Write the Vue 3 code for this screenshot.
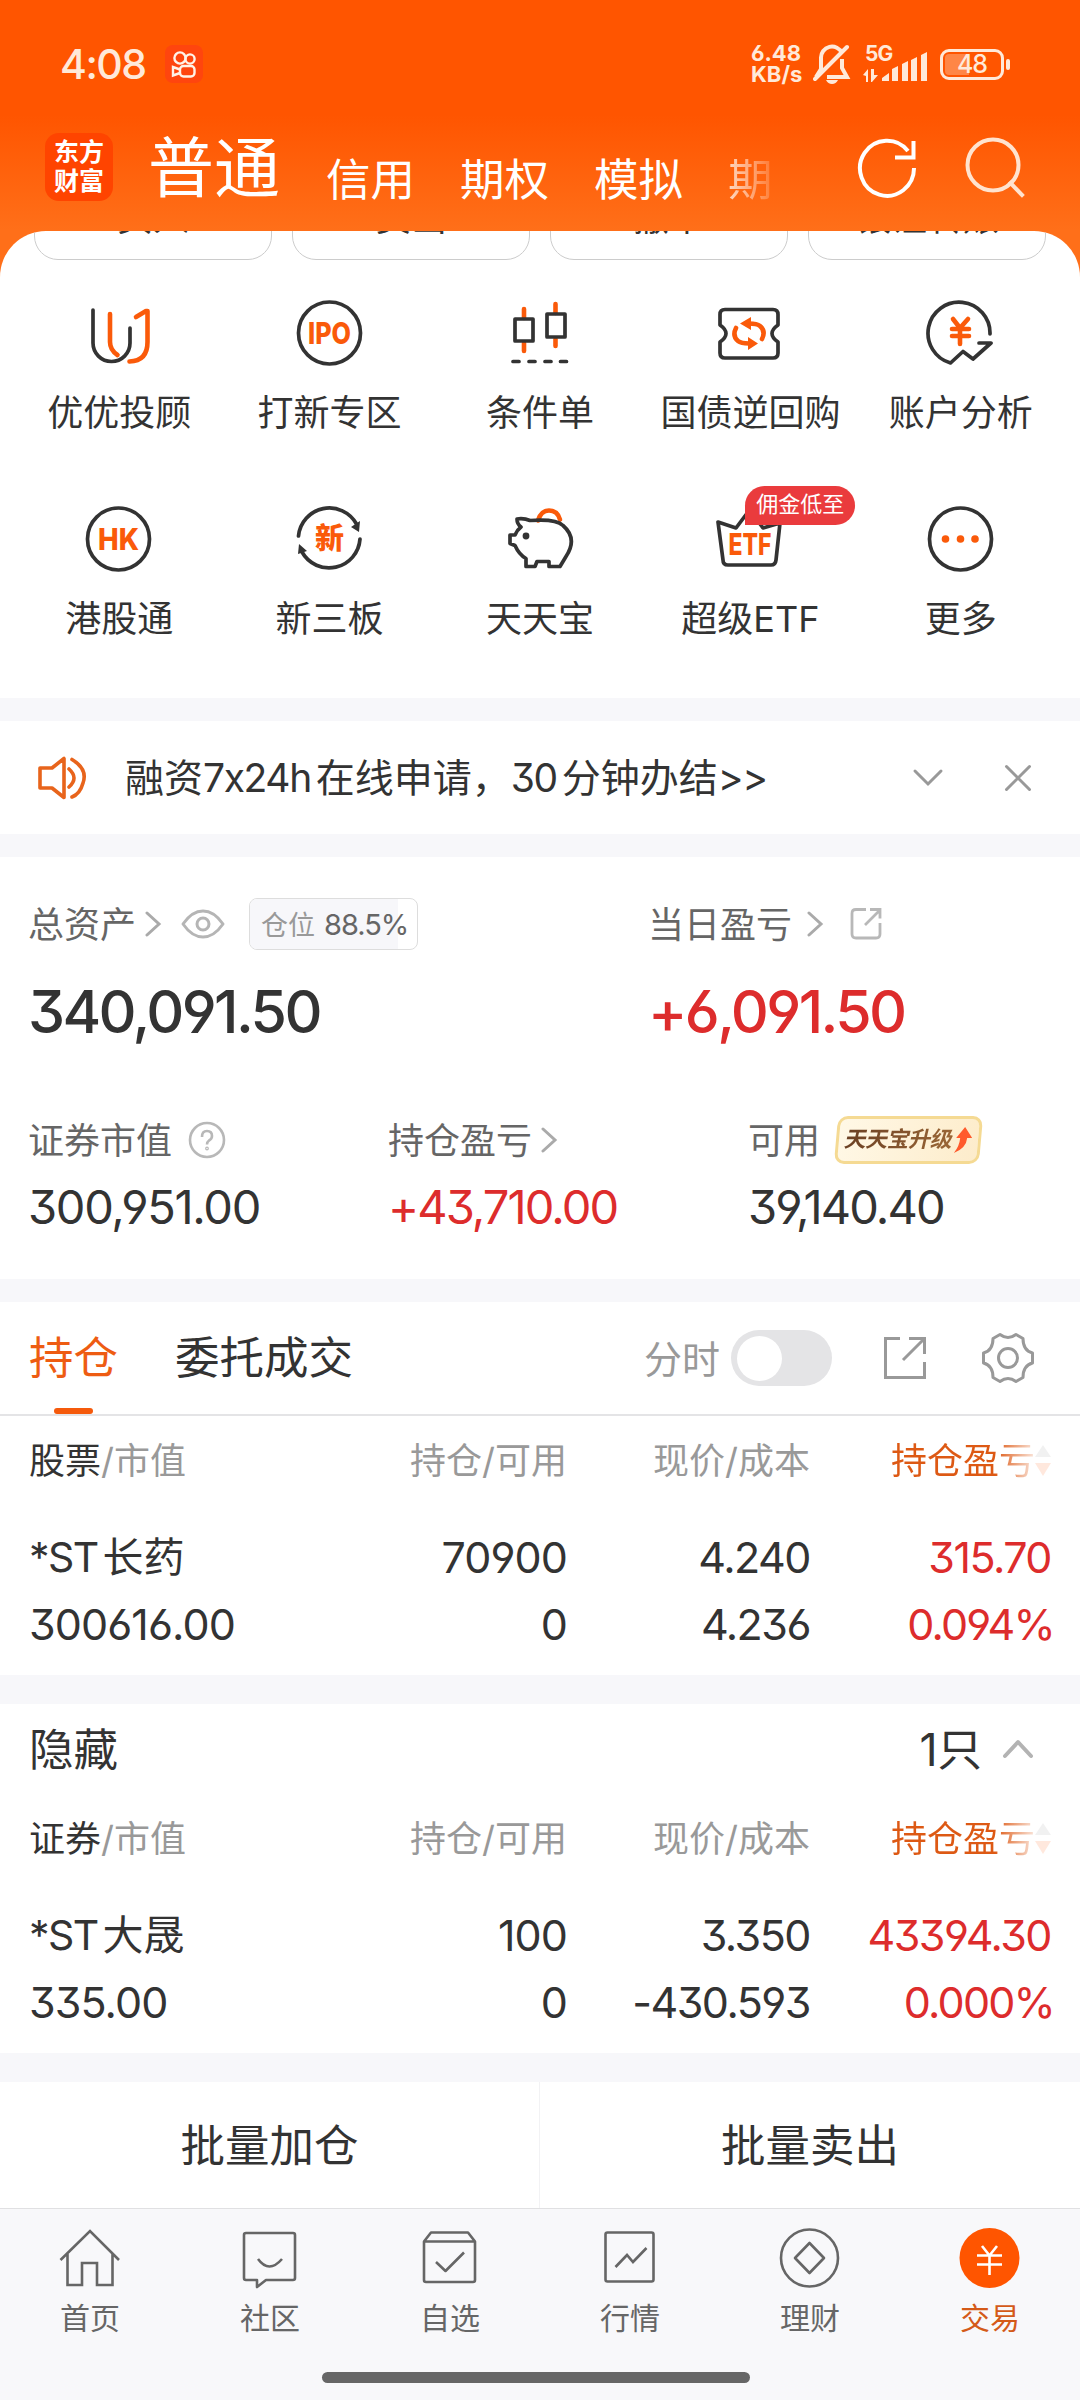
<template>
  <div class="trade-page">
    <header class="top">
      <div class="status-bar">
        <span class="clock">4:08</span>
        <svg class="app-badge" width="38" height="38" viewBox="0 0 38 38" fill="none" stroke="#fff3e8" stroke-width="2.4">
          <rect width="38" height="38" rx="8" fill="#ff450e" stroke="none" />
          <circle cx="15" cy="13" r="5.6" />
          <circle cx="25" cy="14" r="4.6" />
          <rect x="15" y="21" width="14.5" height="10.5" rx="3.5" />
          <path d="M15 24.5l-7-2.5v8.5l7-2.5" />
        </svg>
        <div class="status-right">
          <div class="net-speed"><span>6.48</span><span>KB/s</span></div>
          <svg class="bell" width="38" height="40" viewBox="0 0 38 40" fill="none" stroke="#ffe9d9" stroke-width="4">
            <path d="M29 9A11 11 0 0 0 8 14V25L3 33M14 33H34L29 24V15" />
            <path d="M2 35L34 3" stroke-linecap="round" />
            <path d="M13 36h12q-2 4-6 4t-6-4z" fill="#ffe9d9" stroke="none" />
          </svg>
          <div class="signal">
            <span class="signal-type">5G</span>
            <svg width="66" height="40" viewBox="0 0 66 40" fill="#ffe9d9">
              <path d="M0 31l5-6v13H3v-6zM8 25h3v6h4l-6 7H8z" />
              <path d="M19 37v-3l7-5v8zM29 25l6-3v15h-6zM39 20l6-3v20h-6zM48 16l6-3v24h-6zM58 11l6-3v29h-6z" />
            </svg>
          </div>
          <div class="battery"><span class="battery-fill"></span><span class="battery-num">48</span></div>
          <span class="battery-cap"></span>
        </div>
      </div>

      <div class="nav-row">
        <div class="brand"><span>东方</span><span>财富</span></div>
        <span class="account active">普通</span>
        <div class="accounts">
          <span v-for="name in accounts" :key="name" class="account">{{ name }}</span>
          <span class="account faded">期</span>
        </div>
        <div class="nav-icons">
          <svg width="62" height="66" viewBox="0 0 62 66" fill="none" stroke="#fff" stroke-width="4">
            <path d="M57 34A27 27.5 0 1 1 51 17" />
            <path d="M56.5 7V23.5H38" />
          </svg>
          <svg width="62" height="66" viewBox="0 0 62 66" fill="none" stroke="#ffe3cf" stroke-width="4">
            <circle cx="29" cy="31" r="25.5" />
            <path d="M46.5 49L58 61" stroke-linecap="square" />
          </svg>
        </div>
      </div>
    </header>

    <main class="content">
      <div class="quick-actions">
        <span v-for="name in quickActions" :key="name" class="quick-btn">{{ name }}</span>
      </div>

      <div class="features">
        <div v-for="item in features" :key="item.label" class="feature">
          <svg class="feature-icon" width="72" height="72" viewBox="0 0 72 72" v-html="item.icon"></svg>
          <span v-if="item.badge" class="feature-badge">{{ item.badge }}</span>
          <span class="feature-label">{{ item.label }}</span>
        </div>
      </div>
    </main>

    <section class="notice">
      <svg width="52" height="46" viewBox="0 0 52 46" fill="none" stroke="#e8641b" stroke-width="3.6" stroke-linejoin="round" stroke-linecap="round">
        <path d="M5 13h12l12-9.5v39L17 33H5z" />
        <path d="M34 14q10 9 0 18M37 4.500Q53 14 48 28q-3 11-11 14" />
      </svg>
      <span class="notice-text">融资<i>7x24h</i>在线申请，<i>30</i>分钟办结<i class="arrows">&gt;&gt;</i></span>
      <svg class="notice-down" width="32" height="20" viewBox="0 0 32 20" fill="none" stroke="#999" stroke-width="3" stroke-linecap="round">
        <path d="M3 3l13 13L29 3" />
      </svg>
      <svg width="28" height="28" viewBox="0 0 28 28" fill="none" stroke="#999" stroke-width="3" stroke-linecap="round">
        <path d="M2.5 2.5l23 23M25.5 2.5l-23 23" />
      </svg>
    </section>

    <section class="assets">
      <div class="asset">
        <div class="asset-label">
          <span>总资产</span>
          <svg class="chevron near" width="18" height="26" viewBox="0 0 18 26"><path d="M3 2l12 11L3 24" /></svg>
          <svg class="eye" width="44" height="32" viewBox="0 0 44 32" fill="none" stroke="#b5b5b5" stroke-width="3">
            <path d="M2 16Q11 3 22 3t20 13Q33 29 22 29T2 16z" stroke-linejoin="round" />
            <circle cx="22" cy="16" r="6" />
          </svg>
          <span class="position"><span class="position-fill" :style="{ width: position + '%' }"></span><em>仓位</em><b>{{ position }}%</b></span>
        </div>
        <strong class="asset-main">340,091.50</strong>
      </div>
      <div class="asset">
        <div class="asset-label">
          <span>当日盈亏</span>
          <svg class="chevron far" width="18" height="26" viewBox="0 0 18 26"><path d="M3 2l12 11L3 24" /></svg>
          <svg class="share-sm" width="36" height="36" viewBox="0 0 36 36" fill="none" stroke="#b8b8b8" stroke-width="2.8">
            <path d="M18 3.500H8q-4 0-4 4V28q0 4 4 4h20q4 0 4-4V17" />
            <path d="M22 3.500h10v9M31 5L17 19" />
          </svg>
        </div>
        <strong class="asset-main up">+6,091.50</strong>
      </div>
      <div class="asset-subs">
        <div class="asset">
          <div class="asset-label">
            <span>证券市值</span>
            <svg class="help" width="38" height="38" viewBox="0 0 38 38" fill="none" stroke="#b8b8b8" stroke-width="2.6">
              <circle cx="19" cy="19" r="17" />
              <path d="M14 16q0-6 5-6t5 5q0 3-3 4.500-2 1.500-2 4" />
              <circle cx="19" cy="27.5" r="0.6" />
            </svg>
          </div>
          <strong class="asset-sub">300,951.00</strong>
        </div>
        <div class="asset">
          <div class="asset-label">
            <span>持仓盈亏</span>
            <svg class="chevron near" width="18" height="26" viewBox="0 0 18 26"><path d="M3 2l12 11L3 24" /></svg>
          </div>
          <strong class="asset-sub up tight">+43,710.00</strong>
        </div>
        <div class="asset">
          <div class="asset-label">
            <span>可用</span>
            <span class="upgrade">
              <span class="upgrade-text">天天宝升级</span>
              <svg width="20" height="26" viewBox="0 0 20 26" fill="#ff5a2c"><path d="M12 0l8 11h-5q0 10-12 15 5-7 5-15H4z" /></svg>
            </span>
          </div>
          <strong class="asset-sub tight">39,140.40</strong>
        </div>
      </div>
    </section>

    <section class="holdings">
      <div class="tabs">
        <span class="tab active">持仓</span>
        <span class="tab">委托成交</span>
        <div class="tools">
          <span class="minute">分时</span>
          <span class="switch"></span>
          <svg class="share" width="46" height="46" viewBox="0 0 46 46" fill="none" stroke="#999" stroke-width="3">
            <path d="M18 3.500H3.500V42.500H42.500V27M27 3.500H42.500V19M41.500 4.500L21 25" />
          </svg>
          <svg width="54" height="54" viewBox="0 0 54 54" fill="none" stroke="#999" stroke-width="3" stroke-linejoin="round">
            <path d="M19 3.500q8 6 16 0l7 4q0 12 9.500 14.500v10q-9.500 2.500-9.500 14.500l-7 4q-8-6-16 0l-7-4q0-12-9.500-14.500v-10q9.500-2.500 9.500-14.500z" />
            <circle cx="27" cy="27" r="9.5" />
          </svg>
        </div>
      </div>
      <div class="table-head">
        <span><b>股票</b>/市值</span><span>持仓/可用</span><span>现价/成本</span>
        <span class="sorted"><i>持仓盈亏</i><svg width="16" height="32" viewBox="0 0 16 32"><path d="M8 0l8 12H0z" fill="#999" /><path d="M8 31l8-13H0z" fill="#ff5500" /></svg></span>
      </div>
      <div class="table-row">
        <span class="name"><i>*ST</i>长药</span><span>70900</span><span class="price">4.240</span><span class="up price">315.70</span>
        <span>300616.00</span><span>0</span><span class="price">4.236</span><span class="up percent">0.094%</span>
      </div>
    </section>

    <section class="hidden-stocks">
      <div class="hidden-title">
        <span>隐藏</span>
        <span class="count">1只</span>
        <svg width="34" height="22" viewBox="0 0 34 22" fill="none" stroke="#b3b3b3" stroke-width="4" stroke-linecap="round" stroke-linejoin="round">
          <path d="M4 18L17 4l13 14" />
        </svg>
      </div>
      <div class="table-head">
        <span><b>证券</b>/市值</span><span>持仓/可用</span><span>现价/成本</span>
        <span class="sorted"><i>持仓盈亏</i><svg width="16" height="32" viewBox="0 0 16 32"><path d="M8 0l8 12H0z" fill="#999" /><path d="M8 31l8-13H0z" fill="#ff5500" /></svg></span>
      </div>
      <div class="table-row">
        <span class="name"><i>*ST</i>大晟</span><span>100</span><span class="price">3.350</span><span class="up price">43394.30</span>
        <span>335.00</span><span>0</span><span class="price">-430.593</span><span class="up percent">0.000%</span>
      </div>
    </section>

    <section class="batch">
      <span>批量加仓</span>
      <span>批量卖出</span>
    </section>

    <footer class="bottom">
      <nav class="bottom-nav">
        <div v-for="item in navItems" :key="item.label" class="nav-item" :class="{ active: item.active }">
          <svg width="64" height="64" viewBox="0 0 64 64" fill="none" stroke="#666" stroke-width="2.6" v-html="item.icon"></svg>
          <span>{{ item.label }}</span>
        </div>
      </nav>
      <div class="home-indicator"></div>
    </footer>
  </div>
</template>

<script setup>
import { ref } from 'vue'

const position = ref(88.5)

const accounts = ['信用', '期权', '模拟']
const quickActions = ['买入', '卖出', '撤单', '银证转账']

const dark = 'fill="none" stroke="#333" stroke-width="3.7" stroke-linecap="round" stroke-linejoin="round"'
const orange = 'fill="none" stroke="#fa5a0a" stroke-width="4.6" stroke-linecap="round" stroke-linejoin="round"'
const label = 'fill="#fa5a0a" text-anchor="middle" font-weight="800"'
const ring = `<circle cx="35.5" cy="36" r="31" ${dark}/>`

const features = [
  {
    label: '优优投顾',
    icon: `<path d="M10 13V46a18.500 18.500 0 0 0 37 0V31" ${dark}/>
      <path d="M27 17V45q0 8 7.500 13M53 20l10-6h1.500V45q0 19-18 19.500" ${orange}/>`,
  },
  {
    label: '打新专区',
    icon: `${ring}<text x="35.500" y="46.500" font-family="Inter, sans-serif" font-size="30" textLength="43" lengthAdjust="spacingAndGlyphs" ${label}>IPO</text>`,
  },
  {
    label: '条件单',
    icon: `<path d="M20 12v9M20 46v8M51.500 7v9M51.500 42v7" ${orange}/>
      <path d="M11 22h18v22H11zM43 17h18v23H43zM9 64.500h6M25 64.500h6M41 64.500h6M56.500 64.500h6" ${dark}/>`,
  },
  {
    label: '国债逆回购',
    icon: `<path d="M11 12.500H59q5 0 5 5V28q-12 8.500 0 17V56q0 5-5 5H11q-5 0-5-5V45q12-8.500 0-17V17.500q0-5 5-5z" ${dark}/>
      <path d="M22 31q-4 8 2 13 3 2.500 11 2.500M48 42q4-8-2-13-3-2.500-11-2.500" ${orange}/>
      <path d="M37 20v13l-11-6.500zM34 40v13l10-6.500z" fill="#fa5a0a"/>`,
  },
  {
    label: '账户分析',
    icon: `<path d="M65 37A31 31 0 1 0 25.500 66L38 54.500l10 7.500L66 46H54" ${dark}/>
      <path d="M28 22l7 9 8-9M35 31v16M27 32h17M27 39h17" ${orange}/>`,
  },
  {
    label: '港股通',
    icon: `${ring}<text x="35.500" y="46.500" font-family="Inter, sans-serif" font-size="30" textLength="41" lengthAdjust="spacingAndGlyphs" ${label}>HK</text>`,
  },
  {
    label: '新三板',
    icon: `<path d="M4.500 33A31 31 0 0 1 62.500 21M66 36A31 31 0 0 1 8 49" ${dark}/>
      <path d="M66 18l-1 11-8-5zM5 41l8 7-9 3z" fill="#333"/>
      <text x="35.500" y="46" font-family="Noto Sans CJK SC, sans-serif" font-size="29" ${label}>新</text>`,
  },
  {
    label: '天天宝',
    icon: `<path d="M34 17.500q3-10 11-10 8.500 0 11 9" ${orange}/>
      <path d="M13 16q7-1 13 1.500 26-2 33 5 15 13 3 31l-6 10H45v-5H33l-2 5H22v-8q-7-4-11-13l-5-2V32h5q2-5 6-8-4-3-4-8z" ${dark}/>
      <circle cx="22" cy="33" r="3.400" fill="#333"/>`,
  },
  {
    label: '超级ETF',
    badge: '佣金低至',
    icon: `<path d="M4 19l18 6L35.500 7 49 25l17-5-4 37q-.5 5-5 5H14q-5 0-5-5z" ${dark}/>
      <text x="36" y="52" font-family="Inter, sans-serif" font-size="30" textLength="43" lengthAdjust="spacingAndGlyphs" ${label}>ETF</text>`,
  },
  {
    label: '更多',
    icon: `${ring}<g fill="#fa5a0a"><circle cx="20.500" cy="36" r="3.800"/><circle cx="35.500" cy="36" r="3.800"/><circle cx="50" cy="36" r="3.800"/></g>`,
  },
]

const navItems = [
  { label: '首页', icon: '<path d="M2.500 34L32 5l29 29M9.500 28v31H24V37h15v22h15.500V28"/>' },
  { label: '社区', icon: '<path d="M8 7h47q2 0 2 2v43q0 2-2 2H28l-9 7v-7H8q-2 0-2-2V9q0-2 2-2zM20 33q11 15 24 0" stroke-linejoin="round"/>' },
  { label: '自选', icon: '<path d="M13 6.500h37l7 9V54q0 2-2 2H8q-2 0-2-2V15.500zM6 15.500h51M18 36l9.500 9L46 26.500" stroke-linejoin="round"/>' },
  { label: '行情', icon: '<rect x="7.500" y="6.500" width="48" height="49" rx="2"/><path d="M17.500 41L29 29l6 7 13.500-14"/>' },
  { label: '理财', icon: '<circle cx="31.500" cy="32" r="28.500"/><path d="M31.500 17L46 32 31.500 47 17 32z" stroke-linejoin="round"/>' },
  {
    label: '交易',
    active: true,
    icon: '<circle cx="31.500" cy="32" r="30" fill="#ff5500" stroke="none"/><path d="M24 20l7.500 9.500L39 20M31.500 29v20M19 29.500h25M19 38.500h25" stroke="#fff"/>',
  },
]
</script>

<style>
body {
  margin: 0;
}
</style>

<style scoped>
.trade-page {
  width: 1080px;
  height: 2400px;
  overflow: hidden;
  display: flex;
  flex-direction: column;
  background: linear-gradient(#ff5500 115px, #ff6f19 230px, #ff6f19 290px, #f7f7fa 290px);
  color: #333;
  font-family: Inter, 'Noto Sans CJK SC', sans-serif;
  font-feature-settings: 'cv03', 'cv04', 'cv09';
}

.trade-page > * {
  flex: none;
  box-sizing: border-box;
}

i,
em {
  font-style: normal;
}

svg {
  flex: none;
  display: block;
}

.up {
  color: #dd2c2c;
}

.top {
  height: 231px;
}

.status-bar {
  height: 128px;
  padding: 0 70px 0 60px;
  display: flex;
  align-items: center;
  color: #ffe9d9;
}

.clock {
  font-size: 41px;
  font-weight: 500;
  letter-spacing: -1.5px;
}

.app-badge {
  margin-left: 19px;
}

.status-right {
  margin-left: auto;
  display: flex;
  align-items: center;
}

.net-speed {
  width: 62px;
  display: flex;
  flex-direction: column;
  font-size: 22px;
  line-height: 21px;
  font-weight: 700;
}

.signal {
  position: relative;
  width: 66px;
  margin-left: 12px;
}

.signal-type {
  position: absolute;
  left: 2px;
  top: -2px;
  font-size: 21px;
  line-height: 24px;
  font-weight: 700;
  letter-spacing: -1px;
}

.battery {
  width: 64px;
  height: 31px;
  margin-left: 11px;
  box-sizing: border-box;
  border: 3px solid #ffe9d9;
  border-radius: 9px;
  padding: 2px;
  display: flex;
  position: relative;
}

.battery-fill {
  width: 24px;
  background: #ff8646;
  border-radius: 4px 0 0 4px;
}

.battery-num {
  position: absolute;
  inset: 0;
  text-align: center;
  font-size: 25px;
  line-height: 25px;
  font-weight: 500;
  letter-spacing: -1px;
}

.battery-cap {
  width: 4px;
  height: 11px;
  margin-left: 2px;
  border-radius: 2px;
  background: #ffe9d9;
}

.nav-row {
  height: 78px;
  padding: 0 54px 0 45px;
  display: flex;
  align-items: center;
  color: #fff;
}

.brand {
  width: 68px;
  height: 68px;
  border-radius: 14px;
  background: #ff4400;
  display: flex;
  flex-direction: column;
  align-items: center;
  justify-content: center;
  font-size: 25px;
  line-height: 29px;
  font-weight: 700;
}

.account {
  font-size: 44.5px;
  line-height: 60px;
}

.account.active {
  margin-left: 35px;
  padding-top: 2px;
  font-size: 66px;
  line-height: 78px;
}

.accounts {
  display: flex;
  gap: 45px;
  margin-left: 46px;
  padding-top: 25px;
}

.account.faded {
  background: linear-gradient(90deg, rgba(255, 255, 255, 0.75), rgba(255, 255, 255, 0.15));
  background-clip: text;
  color: transparent;
}

.nav-icons {
  margin-left: auto;
  display: flex;
  gap: 45px;
}

.content {
  height: 467px;
  overflow: hidden;
  border-radius: 46px 46px 0 0;
  background: #fff;
}

.quick-actions {
  display: flex;
  gap: 20px;
  padding: 0 34px;
  height: 29px;
  align-items: flex-end;
}

.quick-btn {
  flex: 1;
  height: 84px;
  box-sizing: border-box;
  border: 1px solid #ccc;
  border-radius: 24px;
  text-align: center;
  font-size: 36px;
  line-height: 83px;
}

.features {
  display: grid;
  grid-template-columns: repeat(5, 1fr);
  grid-auto-rows: 205.5px;
  padding: 37px 14px 0;
}

.feature {
  position: relative;
  display: flex;
  flex-direction: column;
  align-items: center;
}

.feature-label {
  margin-top: 18px;
  font-size: 36px;
  line-height: 52px;
  white-space: nowrap;
}

.feature-badge {
  position: absolute;
  left: 100px;
  top: -17px;
  width: 110px;
  height: 39px;
  border-radius: 20px 20px 20px 0;
  background: #ea3b3d;
  color: #fff;
  font-size: 22px;
  line-height: 37px;
  text-align: center;
}

.notice {
  height: 113px;
  margin-top: 23px;
  padding: 0 48px 0 35px;
  display: flex;
  align-items: center;
  background: #fff;
}

.notice-text {
  margin-left: 38px;
  padding-bottom: 6px;
  font-size: 39px;
  white-space: nowrap;
}

.notice-text i {
  margin-right: 5px;
  letter-spacing: -1.4px;
}

.notice-down {
  margin-left: auto;
  margin-right: 60px;
}

.assets {
  height: 422px;
  margin-top: 23px;
  padding: 40px 0 0 28px;
  background: #fff;
  display: grid;
  grid-template-columns: 620px 1fr;
  grid-template-rows: 216px 1fr;
}

.asset-label {
  height: 54px;
  display: flex;
  align-items: center;
  font-size: 36px;
  color: #666;
}

.asset-label > span:first-child {
  padding-bottom: 4px;
}

.chevron {
  fill: none;
  stroke: #aaa;
  stroke-width: 3;
  stroke-linecap: round;
}

.chevron.near {
  margin-left: 8px;
}

.chevron.far {
  margin-left: 14px;
}

.eye {
  margin-left: 19px;
}

.position {
  position: relative;
  width: 167px;
  height: 50px;
  margin-left: 24px;
  border: 1px solid #ddd;
  border-radius: 8px;
  display: flex;
  align-items: center;
  overflow: hidden;
}

.position em {
  position: relative;
  margin-left: 11px;
  padding-bottom: 2px;
  font-size: 27px;
  color: #999;
}

.position b {
  position: relative;
  margin-left: 9px;
  font-size: 29px;
  font-weight: 400;
  letter-spacing: -1px;
}

.position-fill {
  position: absolute;
  left: 0;
  top: 0;
  bottom: 0;
  background: #f7f7fa;
}

.share-sm {
  margin-left: 24px;
}

.asset-main {
  display: block;
  margin-top: 25px;
  font-size: 59px;
  line-height: 72px;
  font-weight: 500;
  letter-spacing: -2.6px;
}

.asset-subs {
  grid-column: 1 / 3;
  display: grid;
  grid-template-columns: 360px 360px 1fr;
}

.help {
  margin-left: 16px;
}

.asset-sub {
  display: block;
  margin-top: 11px;
  font-size: 47px;
  line-height: 58px;
  font-weight: 400;
  letter-spacing: -1.3px;
}

.asset-sub.tight {
  letter-spacing: -1.9px;
}

.upgrade {
  width: 139px;
  height: 42px;
  margin-left: 16px;
  border: 3px solid #f5da93;
  border-radius: 10px;
  background: linear-gradient(100deg, #fff8e6, #fdeccb);
  transform: skewX(-5deg);
  display: flex;
  align-items: center;
  justify-content: center;
}

.upgrade-text {
  font-size: 22px;
  font-weight: 700;
  line-height: 38px;
  padding-bottom: 2px;
  background: linear-gradient(90deg, #6b4023, #9a6636);
  background-clip: text;
  color: transparent;
  transform: skewX(-8deg);
  letter-spacing: -0.5px;
}

.holdings {
  height: 373px;
  margin-top: 23px;
  background: #fff;
}

.tabs {
  height: 114px;
  box-sizing: border-box;
  padding: 0 45px 0 29px;
  border-bottom: 2px solid #e4e4e6;
  display: flex;
  align-items: center;
  font-size: 44.5px;
}

.tab {
  position: relative;
  margin-right: 57px;
  line-height: 112px;
}

.tab.active {
  color: #ee5c12;
}

.tab.active::after {
  content: '';
  position: absolute;
  left: 25px;
  bottom: 0;
  width: 39px;
  height: 6px;
  border-radius: 3px;
  background: #f55a0c;
}

.tools {
  margin-left: auto;
  display: flex;
  align-items: center;
}

.minute {
  padding-bottom: 4px;
  font-size: 38px;
  color: #999;
}

.switch {
  width: 101px;
  height: 56px;
  margin-left: 11px;
  border-radius: 28px;
  background: #e4e4e6;
}

.switch::before {
  content: '';
  display: block;
  width: 45px;
  height: 45px;
  margin: 5.5px 6px;
  border-radius: 50%;
  background: #fff;
}

.share {
  margin: 0 53px 0 50px;
}

.table-head,
.table-row {
  display: grid;
  grid-template-columns: 300px 238px 243px 241px;
  padding-left: 29px;
  white-space: nowrap;
}

.table-head > span:nth-child(n + 2),
.table-row > span:not(:nth-child(4n + 1)) {
  text-align: right;
}

.table-head {
  height: 90px;
  line-height: 90px;
  font-size: 36px;
  color: #999;
}

.table-head b {
  font-weight: 400;
  color: #333;
}

.table-head .sorted {
  display: flex;
  align-items: center;
  justify-content: flex-end;
}

.sorted i {
  background: linear-gradient(90deg, #dd5914 72%, rgba(221, 89, 20, 0.15));
  background-clip: text;
  color: transparent;
}

.sorted svg {
  opacity: 0.13;
}

.table-row {
  padding-top: 18px;
  grid-auto-rows: 67px;
  font-size: 43px;
  line-height: 67px;
  letter-spacing: -0.9px;
}

.table-row .price {
  letter-spacing: -1.5px;
}

.table-row .name {
  font-size: 41px;
  letter-spacing: 0;
}

.name i {
  margin-right: 5px;
  letter-spacing: -1.6px;
}

.table-row .percent {
  margin-right: -3px;
  letter-spacing: -1.8px;
}

.hidden-stocks {
  height: 349px;
  margin-top: 29px;
  background: #fff;
}

.hidden-title {
  height: 90px;
  padding: 0 45px 0 29px;
  display: flex;
  align-items: center;
  font-size: 44.5px;
}

.hidden-title span {
  padding-bottom: 5px;
}

.count {
  margin: 0 19px 0 auto;
}

.batch {
  height: 126px;
  margin-top: 29px;
  background: #fff;
  display: grid;
  grid-template-columns: 539px 541px;
  text-align: center;
  font-size: 44.5px;
  line-height: 128px;
}

.batch span + span {
  border-left: 1px solid #f2f2f4;
}

.bottom {
  height: 192px;
  border-top: 1px solid #e0e0e2;
  background: #f8f8fa;
}

.bottom-nav {
  height: 163px;
  display: grid;
  grid-template-columns: repeat(6, 1fr);
}

.nav-item {
  padding-top: 17px;
  display: flex;
  flex-direction: column;
  align-items: center;
  font-size: 30px;
  line-height: 44px;
  gap: 6px;
  color: #666;
}

.nav-item.active {
  color: #d45a18;
}

.home-indicator {
  width: 428px;
  height: 11px;
  margin-left: 322px;
  border-radius: 6px;
  background: #666;
}
</style>
